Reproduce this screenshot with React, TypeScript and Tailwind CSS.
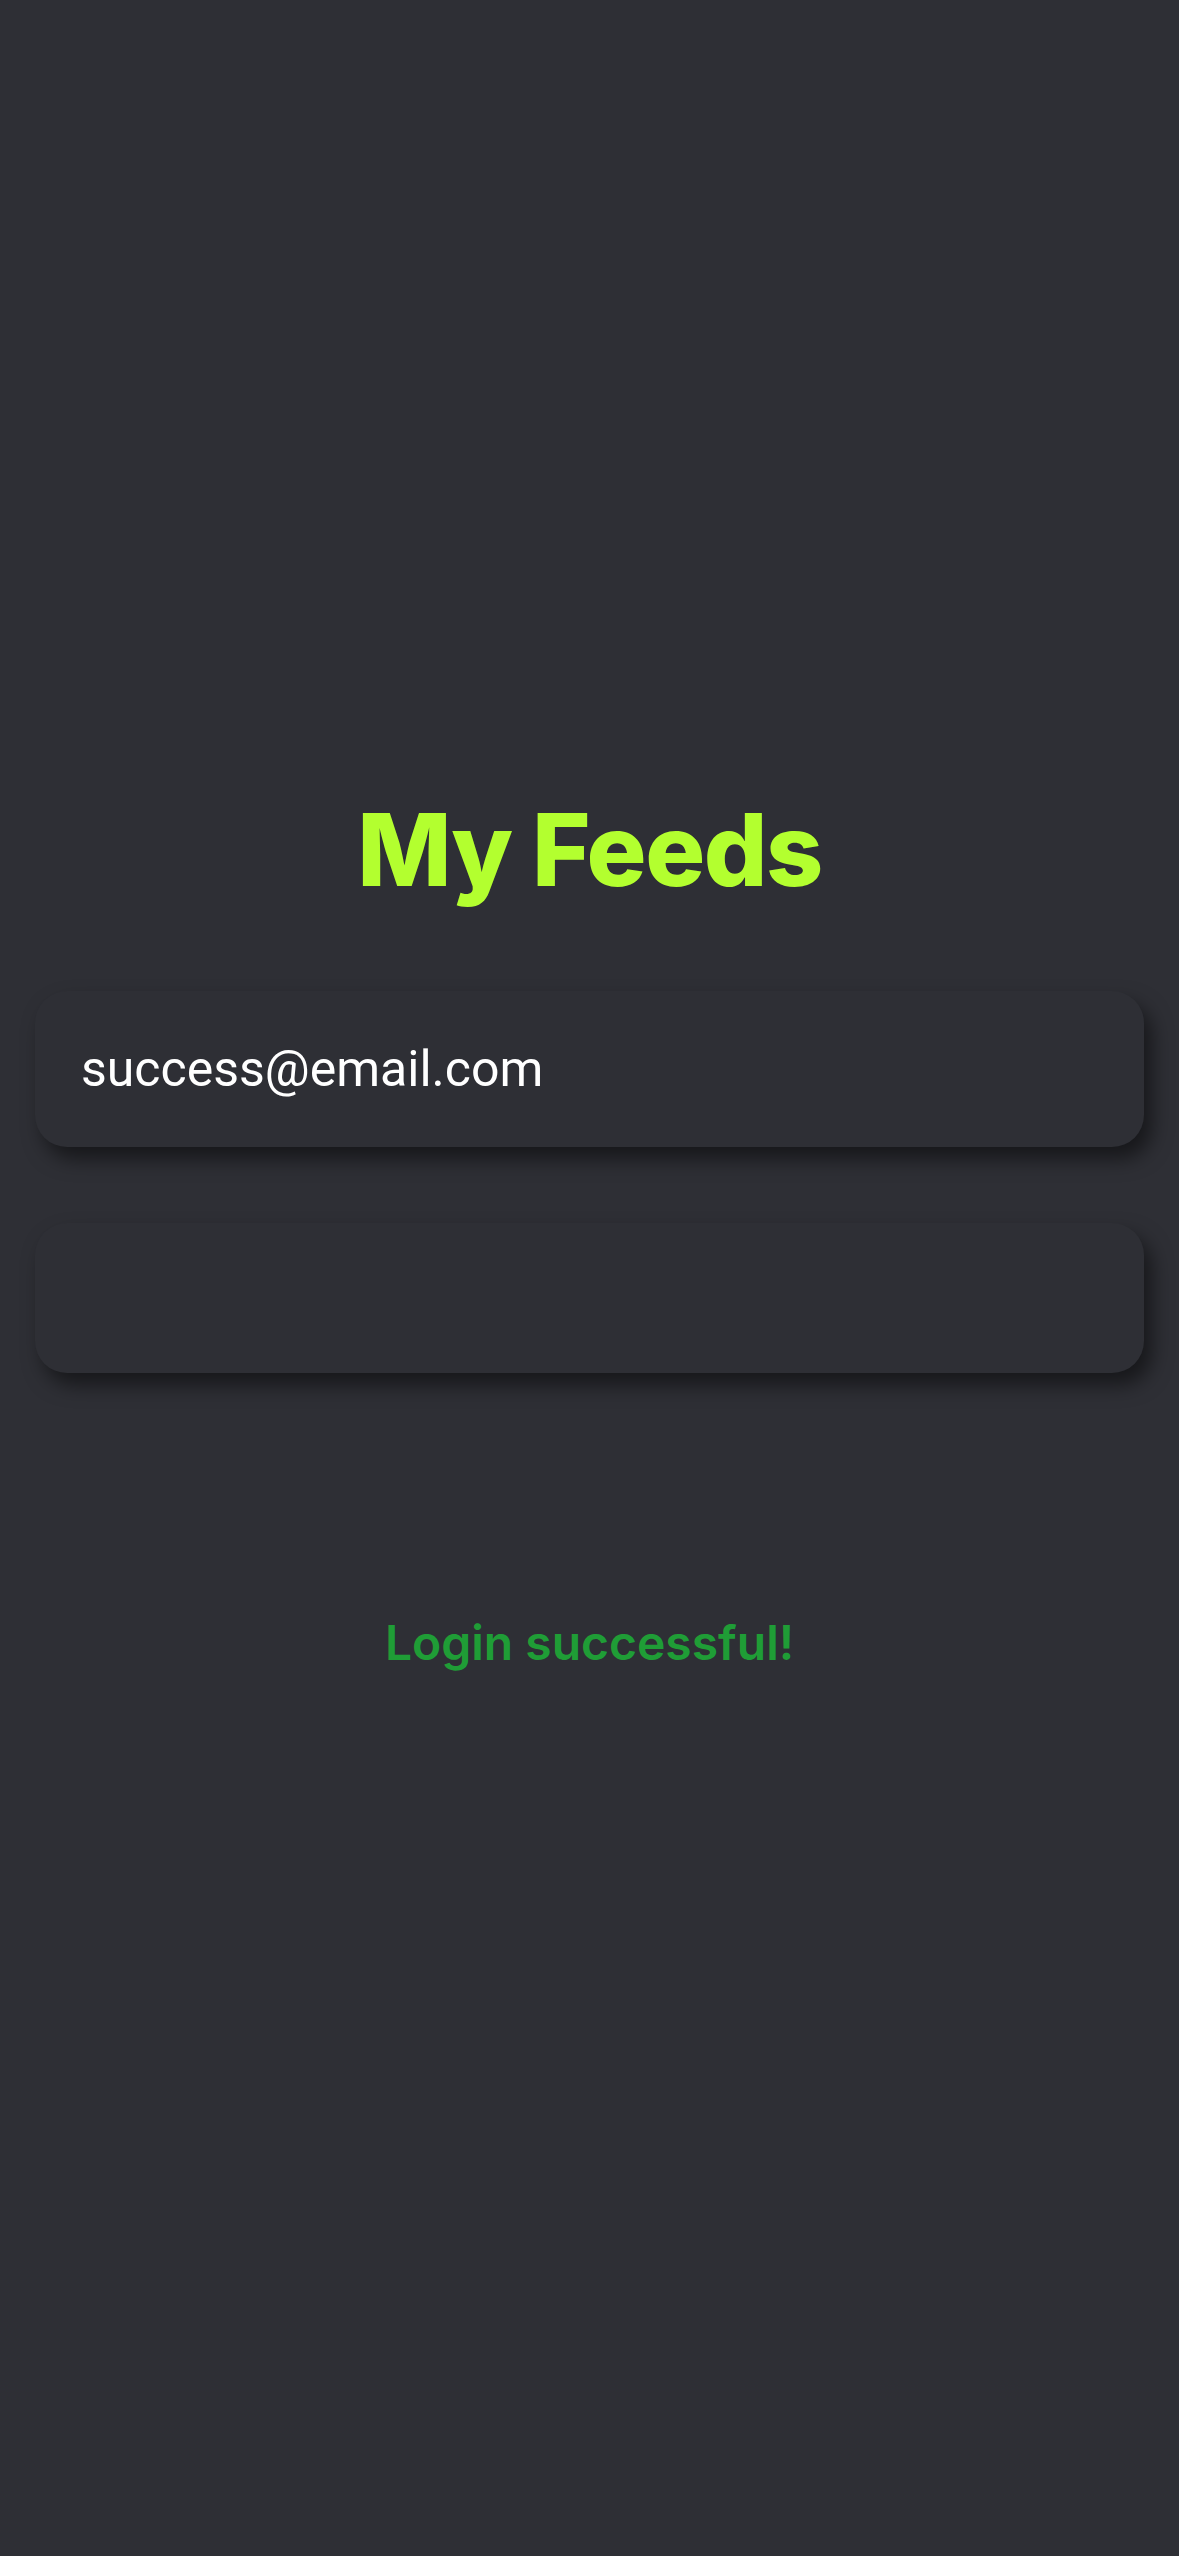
export default function App() {
  return (
    <div className="min-h-[2556px] w-full bg-[#2e2f35] flex flex-col items-center" style={{ fontFamily: "Inter, 'Noto Sans', sans-serif" }}>
      <h1 className="mt-[800px] text-[100px] leading-[100px] font-extrabold tracking-[-1.5px] text-[#b3ff2f] h-[100px]">
        My Feeds
      </h1>
      <div className="w-full px-[35px] mt-[91px] flex flex-col gap-[76px]">
        <div className="h-[156px] w-full rounded-[32px] bg-[#2e2f35] shadow-[8px_12px_20px_rgba(0,0,0,0.5)] flex items-center pl-[46px]">
          <span className="text-[50px] text-white" style={{ fontFamily: "Roboto, sans-serif" }}>success@email.com</span>
        </div>
        <div className="h-[150px] w-full rounded-[32px] bg-[#2e2f35] shadow-[8px_12px_20px_rgba(0,0,0,0.5)]" />
      </div>
      <p className="mt-[240px] text-[48px] leading-[60px] font-semibold text-[#1f9d36]">Login successful!</p>
    </div>
  );
}
